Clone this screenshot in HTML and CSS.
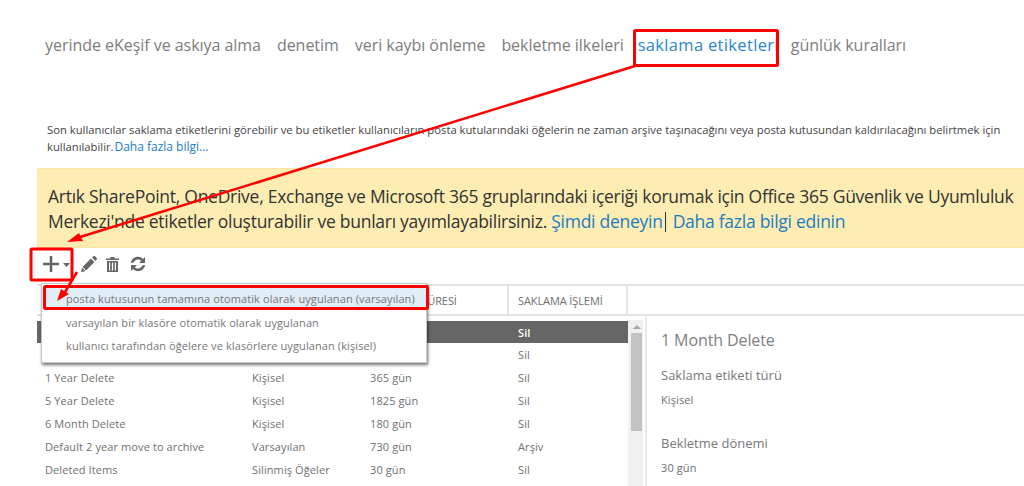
FILE: index.html
```html
<!DOCTYPE html>
<html lang="tr">
<head>
<meta charset="utf-8">
<title>saklama etiketleri</title>
<link rel="stylesheet" href="styles.css">
</head>
<body>
<div class="page">
  <nav class="tabs">
    <a>yerinde eKeşif ve askıya alma</a>
    <a>denetim</a>
    <a>veri kaybı önleme</a>
    <a>bekletme ilkeleri</a>
    <a class="active">saklama etiketleri</a>
    <a>günlük kuralları</a>
  </nav>
  <p class="intro">Son kullanıcılar saklama etiketlerini görebilir ve bu etiketler kullanıcıların posta kutularındaki öğelerin ne zaman arşive taşınacağını veya posta kutusundan kaldırılacağını belirtmek için kullanılabilir. <a>Daha fazla bilgi...</a></p>
  <div class="banner">Artık SharePoint, OneDrive, Exchange ve Microsoft 365 gruplarındaki içeriği korumak için Office 365 Güvenlik ve Uyumluluk Merkezi'nde etiketler oluşturabilir ve bunları yayımlayabilirsiniz. <a>Şimdi deneyin</a><span class="sep"></span><a>Daha fazla bilgi edinin</a></div>
  <div class="toolbar">
    <svg class="ic-plus" width="16" height="16" viewBox="0 0 16 16"><path d="M6.700 0h2.600v6.700H16v2.600H9.300V16H6.700V9.300H0V6.700h6.700z"/></svg>
    <svg class="ic-caret" width="7" height="4" viewBox="0 0 7 4"><path d="M0 0h7L3.500 4z"/></svg>
    <svg class="ic-pencil" width="16" height="16" viewBox="0 0 16 16"><path d="M12.500.3c.6-.4 1.300-.3 1.800.2l1.200 1.200c.5.5.6 1.200.2 1.800l-1.300 1.500-3.400-3.400zM9.900 2.600l3.500 3.500-8.300 8.300-3.500-3.500zM1 11.700l3.300 3.300-1 .4L0 16z"/></svg>
    <svg class="ic-trash" width="13" height="15" viewBox="0 0 13 15"><path d="M4.500 0h4v1.500H13V3H0V1.500h4.500zM1 4h11v11H1zM3 5.500v8h1.200v-8zM5.900 5.500v8h1.200v-8zM8.800 5.500v8H10v-8z" fill-rule="evenodd"/></svg>
    <svg class="ic-refresh" width="16" height="16" viewBox="0 0 16 16"><path d="M8 .8c2 0 3.700.8 5 2.100L15 1v6H9l2.200-2.200C10.400 3.900 9.300 3.400 8 3.400c-2.100 0-3.900 1.400-4.500 3.300H.8C1.500 3.300 4.400.8 8 .8zM1 9h6l-2.200 2.200c.8.900 1.900 1.400 3.200 1.400 2.100 0 3.900-1.400 4.500-3.300h2.700c-.7 3.400-3.600 5.900-7.200 5.900-2 0-3.700-.8-5-2.100L1 15z"/></svg>
  </div>
  <div class="workspace">
    <div class="list">
      <div class="row head">
        <span>AD</span><span>TÜR</span><span class="c3">SAKLAMA SÜRESİ</span><span class="c4">SAKLAMA İŞLEMİ</span>
      </div>
      <div class="body">
        <div class="rows">
          <div class="row selected"><span>1 Month Delete</span><span>Kişisel</span><span>30 gün</span><span>Sil</span></div>
          <div class="row"><span>1 Week Delete</span><span>Kişisel</span><span>7 gün</span><span>Sil</span></div>
          <div class="row"><span>1 Year Delete</span><span>Kişisel</span><span>365 gün</span><span>Sil</span></div>
          <div class="row"><span>5 Year Delete</span><span>Kişisel</span><span>1825 gün</span><span>Sil</span></div>
          <div class="row"><span>6 Month Delete</span><span>Kişisel</span><span>180 gün</span><span>Sil</span></div>
          <div class="row"><span>Default 2 year move to archive</span><span>Varsayılan</span><span>730 gün</span><span>Arşiv</span></div>
          <div class="row"><span>Deleted Items</span><span>Silinmiş Öğeler</span><span>30 gün</span><span>Sil</span></div>
        </div>
        <div class="scrollbar"><div class="up"></div><div class="thumb"></div></div>
      </div>
    </div>
    <aside class="details">
      <h2>1 Month Delete</h2>
      <h3>Saklama etiketi türü</h3>
      <p>Kişisel</p>
      <h3 class="second">Bekletme dönemi</h3>
      <p>30 gün</p>
    </aside>
  </div>
  <ul class="menu">
    <li class="hot">posta kutusunun tamamına otomatik olarak uygulanan (varsayılan)</li>
    <li>varsayılan bir klasöre otomatik olarak uygulanan</li>
    <li>kullanıcı tarafından öğelere ve klasörlere uygulanan (kişisel)</li>
  </ul>
  <svg class="marks" width="1024" height="486" viewBox="0 0 1024 486">
    <g fill="none" stroke="#f00">
      <rect x="634.500" y="30.500" width="143" height="35" rx="1" stroke-width="3"/>
      <rect x="31" y="249" width="41" height="31" rx="1" stroke-width="3"/>
      <rect x="44.500" y="286.500" width="383" height="22" rx="1" stroke-width="3"/>
      <path d="M635 66L80 237" stroke-width="2.500"/>
      <path d="M77 272L65 292" stroke-width="2.500"/>
    </g>
    <path d="M67 242L79 233L83 241z" fill="#f00"/>
    <path d="M57 301L61 289L69 294z" fill="#f00"/>
  </svg>
</div>
</body>
</html>
```
FILE: styles.css
```css
* { box-sizing: border-box; }
html, body { margin: 0; padding: 0; background: #fff; }
body { font-family: "Open Sans", "Noto Sans", sans-serif; color: #666; overflow: hidden; }
.page { position: relative; width: 1024px; height: 486px; overflow: hidden; padding-left: 37px; }
a { color: #1b7cc4; }

.tabs { display: flex; gap: 16px; height: 90px; padding: 33px 0 0 8px; font-size: 16px; line-height: 24px; letter-spacing: -.04px; color: #7d7d7d; white-space: nowrap; }
.tabs a { color: #7d7d7d; }
.tabs a.active { color: #2b86cc; font-size: 16.500px; letter-spacing: .33px; margin: 0 -4px 0 -2px; }

.intro { margin: 0; height: 78px; padding: 31px 0 0 10px; width: 975px; font-size: 11.250px; line-height: 17px; color: #444; }
.intro a { font-size: 12px; margin-left: -2px; }

.banner { height: 80px; margin-right: -1px; padding: 15px 0 0 10px; background: #fdedb2; border: 1px solid #fbe6a2; border-right: 0; font-size: 17.500px; line-height: 25px; letter-spacing: -.27px; color: #333; }
.sep { display: inline-block; width: 1px; height: 20px; margin: 0 7px 0 2px; background: #333; vertical-align: -4px; }

.toolbar { display: flex; align-items: center; height: 36px; padding: 0 0 4px 6px; }
.toolbar svg { fill: #666; flex: none; }
.ic-caret { margin-left: 4px; margin-top: 2px; }
.ic-pencil { margin-left: 11px; }
.ic-trash { margin-left: 9px; }
.ic-refresh { margin-left: 11px; }

.workspace { display: flex; height: 202px; }
.list { width: 608px; flex: none; }
.row { display: grid; grid-template-columns: 207px 118px 148px 1fr; padding-left: 8px; height: 23px; line-height: 23px; font-size: 11px; letter-spacing: .1px; color: #707070; white-space: nowrap; }
.row.head { height: 32px; line-height: 30px; border-top: 2px solid #e3e3e3; border-bottom: 2px solid #e3e3e3; font-size: 11px; letter-spacing: -.1px; width: 987px; grid-template-columns: 207px 118px 139px 119px; }
.row.head .c3 { border-right: 2px solid #e3e3e3; }
.row.head .c4 { padding-left: 9px; border-right: 2px solid #e3e3e3; }
.body { display: flex; padding-top: 5px; }
.rows { width: 591px; flex: none; }
.row.selected { background: #666; color: #fff; height: 22px; line-height: 23px; font-weight: 600; }
.scrollbar { width: 15px; background: #f0f0f0; flex: none; height: 170px; margin-top: -1px; padding: 0 1px 0 3px; }
.up { width: 0; height: 0; margin: 5px auto 4px; border: 4px solid transparent; border-top: 0; border-bottom: 4px solid #a6a6a6; }
.thumb { height: 98px; background: #c2c2c2; }

.details { flex: 1; margin-top: 32px; padding: 12px 0 0 14px; border-left: 2px solid #e8e8e8; height: 170px; }
.details h2 { margin: 0; font-size: 16px; line-height: 24px; font-weight: 400; letter-spacing: -.1px; color: #808080; }
.details h3 { margin: 13px 0 0; font-size: 13px; line-height: 20px; font-weight: 400; color: #777; }
.details h3.second { margin-top: 24px; }
.details p { margin: 6px 0 0; font-size: 11px; line-height: 18px; letter-spacing: .1px; color: #707070; }

.menu { position: absolute; left: 41px; top: 283px; width: 386px; height: 80px; margin: 0; padding: 4px 0 0; list-style: none; background: #fff; border: 1px solid #c8c8c8; box-shadow: 1px 2px 3px rgba(0,0,0,.55); font-size: 11px; letter-spacing: .1px; color: #777; white-space: nowrap; }
.menu li { height: 23px; line-height: 23px; padding-left: 24px; }
.menu li.hot { background: #e1edf7; height: 21px; line-height: 22px; margin-bottom: 2px; }

.marks { position: absolute; left: 0; top: 0; pointer-events: none; }
```
